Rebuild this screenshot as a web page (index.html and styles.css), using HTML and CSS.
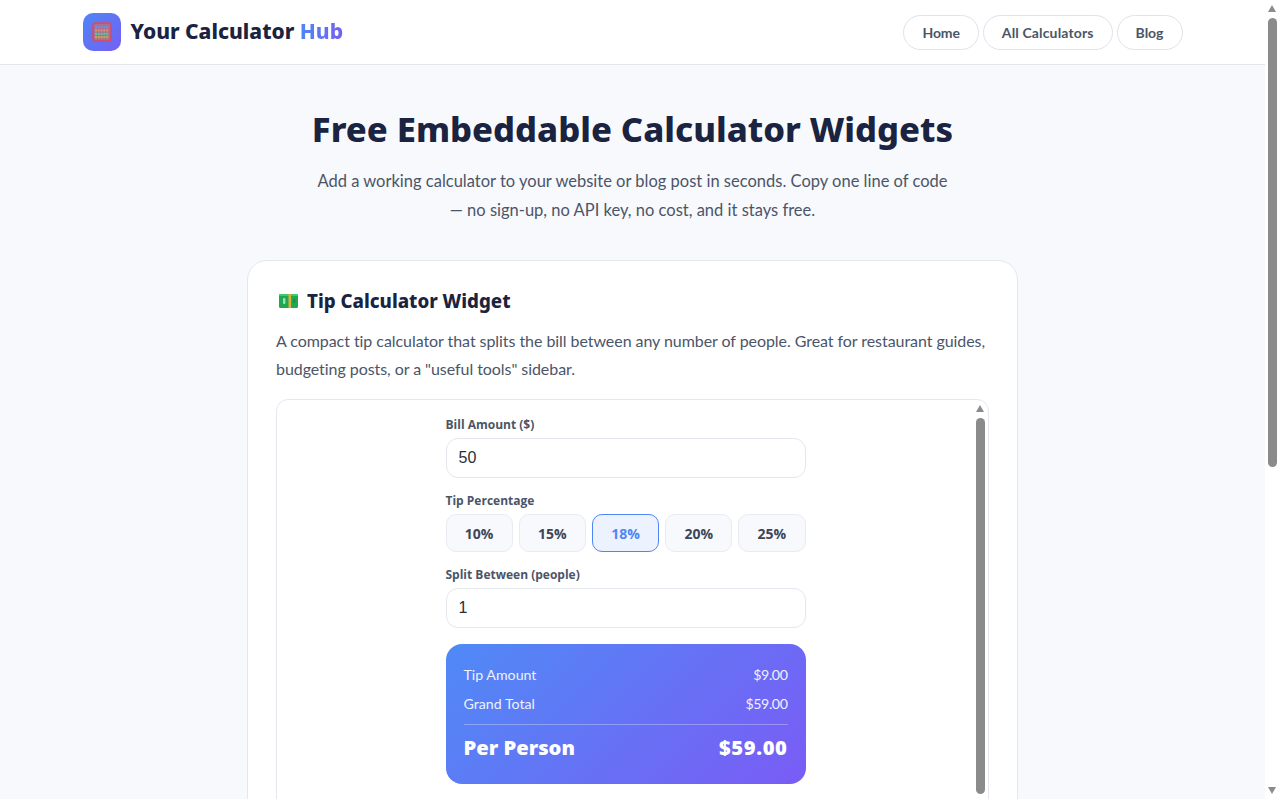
FILE: index.html
```html
<!DOCTYPE html>
<html lang="en">
<head>
<meta charset="utf-8">
<title>Free Embeddable Calculator Widgets</title>
<link rel="stylesheet" href="styles.css">
</head>
<body>
<header class="site-header">
  <div class="header-inner">
    <a class="brand" href="#">
      <span class="brand-icon">
        <svg viewBox="0 0 20 20" width="20" height="20" aria-hidden="true">
          <rect x="1" y="1" width="18" height="18" rx="2.5" fill="#a9708f" stroke="#d9486a" stroke-width="1.5"/>
          <line x1="3" y1="5" x2="17" y2="5" stroke="#6f8fe6" stroke-width="2.2" stroke-dasharray="2 0.8"/>
          <line x1="3" y1="8.4" x2="17" y2="8.4" stroke="#dd8a78" stroke-width="2.2" stroke-dasharray="2 0.8"/>
          <line x1="3" y1="11.8" x2="17" y2="11.8" stroke="#55c6a6" stroke-width="2.2" stroke-dasharray="2 0.8"/>
          <line x1="3" y1="15.1" x2="17" y2="15.1" stroke="#c6a84f" stroke-width="2.2" stroke-dasharray="2 0.8"/>
        </svg>
      </span>
      <span class="brand-name">Your Calculator <span class="brand-accent">Hub</span></span>
    </a>
    <nav class="nav">
      <a class="nav-link" href="#">Home</a>
      <a class="nav-link" href="#">All Calculators</a>
      <a class="nav-link" href="#">Blog</a>
    </nav>
  </div>
</header>
<main class="main">
  <h1 class="title">Free Embeddable Calculator Widgets</h1>
  <p class="lead">Add a working calculator to your website or blog post in seconds. Copy one line of code — no sign-up, no API key, no cost, and it stays free.</p>
  <section class="card">
    <h2 class="card-title">
      <svg class="money" viewBox="0 0 19 14" width="19" height="14" aria-hidden="true">
        <rect x="0" y="0" width="19" height="14" rx="1.5" fill="#20a750"/>
        <rect x="0" y="0" width="19" height="2" rx="1" fill="#3ccb70"/>
        <rect x="9.5" y="0" width="2.6" height="14" fill="#d8b23a"/>
        <rect x="4" y="4" width="2.4" height="6" rx="1" fill="#9be0b2"/>
        <rect x="14.5" y="5" width="1.6" height="4" fill="#148c3d"/>
      </svg>
      Tip Calculator Widget
    </h2>
    <p class="card-desc">A compact tip calculator that splits the bill between any number of people. Great for restaurant guides, budgeting posts, or a "useful tools" sidebar.</p>
    <div class="frame">
      <div class="widget">
        <div class="field">
          <label class="label">Bill Amount ($)</label>
          <div class="input">50</div>
        </div>
        <div class="field">
          <label class="label">Tip Percentage</label>
          <div class="tips">
            <button class="tip">10%</button>
            <button class="tip">15%</button>
            <button class="tip tip-active">18%</button>
            <button class="tip">20%</button>
            <button class="tip">25%</button>
          </div>
        </div>
        <div class="field field-last">
          <label class="label">Split Between (people)</label>
          <div class="input">1</div>
        </div>
        <div class="result">
          <div class="row"><span>Tip Amount</span><span class="val">$9.00</span></div>
          <div class="row row-second"><span>Grand Total</span><span class="val">$59.00</span></div>
          <div class="row-total"><span>Per Person</span><span class="total-val">$59.00</span></div>
        </div>
      </div>
      <div class="frame-scrollbar">
        <span class="arrow-up"></span>
        <span class="thumb thumb-frame"></span>
      </div>
    </div>
  </section>
</main>
<div class="page-scrollbar">
  <span class="arrow-up"></span>
  <span class="thumb thumb-page"></span>
  <span class="arrow-down"></span>
</div>
</body>
</html>
```
FILE: styles.css
```css
* { box-sizing: border-box; }
html, body { margin: 0; height: 799px; overflow: hidden; }
body {
  width: 1280px;
  padding-right: 15px;
  background: #f8f9fd;
  color: #1a2340;
  font-family: "Lato", "Liberation Sans", sans-serif;
  position: relative;
}
.site-header {
  height: 65px;
  background: #fff;
  border-bottom: 1px solid #e4e7ee;
}
.header-inner {
  width: 1100px;
  height: 64px;
  margin: 0 auto;
  display: flex;
  align-items: center;
  justify-content: space-between;
}
.brand { display: flex; align-items: center; gap: 10px; text-decoration: none; color: #1a2340; }
.brand-icon {
  width: 38px;
  height: 38px;
  border-radius: 10px;
  background: linear-gradient(135deg, #4f86f5, #7560f2);
  display: flex;
  align-items: center;
  justify-content: center;
}
.brand-name {
  margin-top: -2px;
  font-family: "Noto Sans", sans-serif;
  font-size: 21px;
  font-weight: 800;
  line-height: 30px;
}
.brand-accent {
  background: linear-gradient(90deg, #4f86f5, #7560f2);
  -webkit-background-clip: text;
  background-clip: text;
  color: transparent;
}
.nav { display: flex; gap: 4px; }
.nav-link {
  height: 35px;
  padding: 0 18px;
  border: 1px solid #dfe3ea;
  border-radius: 18px;
  font-size: 14px;
  font-weight: 700;
  line-height: 33px;
  letter-spacing: 0.14px;
  color: #4b5568;
  text-decoration: none;
}
.nav-link:first-child { letter-spacing: -0.1px; }
.nav-link:last-child { letter-spacing: 0; }
.main { width: 771px; margin: 0 auto; padding-top: 42px; }
.title {
  margin: 0 -40px 17px;
  text-align: center;
  font-family: "Noto Sans", sans-serif;
  font-size: 34.6px;
  font-weight: 800;
  line-height: 43px;
  color: #1a2340;
}
.lead {
  width: 640px;
  margin: 0 auto 35px;
  text-align: center;
  font-size: 16.5px;
  line-height: 29px;
  color: #4b5568;
}
.card {
  height: 700px;
  padding: 26px 28px 0;
  background: #fff;
  border: 1px solid #e4e7ee;
  border-radius: 20px;
}
.card-title {
  display: flex;
  align-items: center;
  gap: 9px;
  margin: 0 0 13px;
  padding-left: 3px;
  font-family: "Noto Sans", sans-serif;
  font-size: 18.7px;
  font-weight: 800;
  line-height: 27px;
  color: #1a2340;
}
.money { flex: none; }
.card-desc {
  margin: 0 -6px 16px 0;
  font-size: 16px;
  line-height: 28px;
  letter-spacing: -0.06px;
  color: #4b5568;
}
.frame {
  position: relative;
  height: 500px;
  padding-right: 14px;
  border: 1px solid #e4e7ee;
  border-radius: 12px;
  background: #fff;
}
.widget { width: 360px; margin: 0 auto; padding-top: 17px; }
.field { margin-bottom: 15px; }
.field-last { margin-bottom: 16px; }
.label {
  display: block;
  margin-bottom: 5px;
  font-family: "Open Sans", sans-serif;
  font-size: 12px;
  font-weight: 700;
  line-height: 16px;
  color: #4b5568;
}
.input {
  height: 40px;
  padding: 0 12px;
  border: 1px solid #e4e7ee;
  border-radius: 12px;
  background: #fff;
  font-family: "Liberation Sans", sans-serif;
  font-size: 16px;
  line-height: 38px;
  color: #2a2f3a;
}
.tips { display: flex; gap: 6px; }
.tip {
  flex: 1;
  height: 38px;
  padding: 0;
  border: 1px solid #e8ebf1;
  border-radius: 10px;
  background: #f8f9fd;
  font-family: "Open Sans", sans-serif;
  font-size: 14px;
  font-weight: 700;
  color: #3d4658;
}
.tip-active { border-color: #4f86f5; background: #edf3fe; color: #4f86f5; }
.result {
  height: 140px;
  padding: 20px 18px 0;
  border-radius: 16px;
  background: linear-gradient(135deg, #4f8af6, #7a5cf5);
  color: #fff;
}
.row {
  display: flex;
  justify-content: space-between;
  font-size: 14.2px;
  line-height: 22px;
  color: #eef1ff;
}
.val { letter-spacing: -0.4px; }
.row-second { margin-top: 7px; }
.row-total {
  display: flex;
  justify-content: space-between;
  margin-top: 9px;
  padding-top: 8px;
  border-top: 1px solid rgba(255, 255, 255, 0.3);
  font-family: "Noto Sans", sans-serif;
  font-size: 20.2px;
  font-weight: 900;
  line-height: 29px;
}
.total-val { letter-spacing: 0.6px; }
.frame-scrollbar {
  position: absolute;
  top: 0;
  right: 0;
  width: 15px;
  height: 100%;
}
.page-scrollbar {
  position: absolute;
  top: 0;
  right: 0;
  width: 15px;
  height: 799px;
  background: #fff;
}
.thumb { position: absolute; left: 3px; width: 9px; border-radius: 5px; background: #8b8b8b; }
.thumb-frame { top: 18px; height: 376px; }
.thumb-page { top: 18px; height: 449px; }
.arrow-up, .arrow-down {
  position: absolute;
  left: 3px;
  width: 0;
  height: 0;
  border-left: 4.5px solid transparent;
  border-right: 4.5px solid transparent;
}
.arrow-up { top: 5px; border-bottom: 7px solid #8b8b8b; }
.arrow-down { bottom: 5px; border-top: 7px solid #8b8b8b; }
```
